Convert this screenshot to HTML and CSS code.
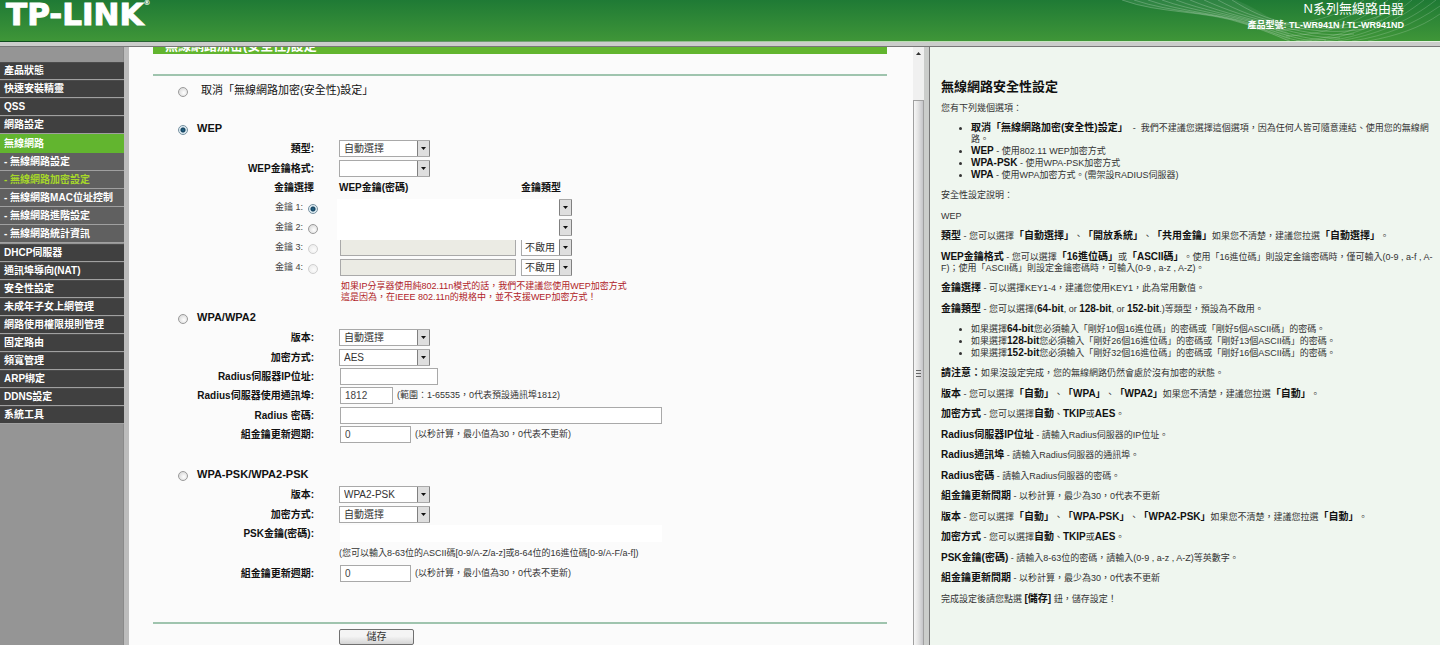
FILE: index.html
```html
<!DOCTYPE html>
<html lang="zh-Hant">
<head>
<meta charset="utf-8">
<title>TP-LINK TL-WR941N / TL-WR941ND</title>
<link rel="stylesheet" href="styles.css">
</head>
<body>
<header class="banner">
  <svg class="waves" width="330" height="41" viewBox="0 0 330 41" fill="none" stroke="#fff" aria-hidden="true">
    <path d="M12 0C50 14 95 10 135 24S170 38 178 41C190 34 150 10 126 0Z" fill="#fff" fill-opacity=".07" stroke="none"/>
    <g stroke-opacity=".22">
      <path d="M12 0C50 14 95 10 135 24S170 38 180 41"/>
      <path d="M24 0C62 13 104 12 138 24S176 38 190 41"/>
      <path d="M38 0C72 12 112 14 142 24S184 38 202 41"/>
      <path d="M52 0C82 11 120 15 148 24S194 39 216 40"/>
      <path d="M66 0C92 10 126 16 154 24S204 38 230 38"/>
      <path d="M80 0C104 10 132 17 160 24S214 37 244 34"/>
      <path d="M94 0C116 10 140 18 168 24S226 35 258 28"/>
      <path d="M108 0C126 10 148 19 176 24S238 32 272 20"/>
      <path d="M122 0C138 10 156 20 184 24S250 28 286 8"/>
    </g>
    <g stroke-opacity=".18">
      <path d="M186 41C230 38 262 26 290 0"/>
      <path d="M200 41C240 38 274 24 302 0"/>
      <path d="M214 41C252 38 286 22 314 0"/>
      <path d="M228 41C264 36 298 22 326 0"/>
      <path d="M242 41C276 36 304 24 330 6"/>
      <path d="M258 41C286 36 310 28 330 14"/>
      <path d="M176 36C220 34 250 22 278 0"/>
      <path d="M166 30C210 30 238 20 266 0"/>
      <path d="M156 24C198 26 226 16 254 0"/>
    </g>
  </svg>
  <div class="logo">TP-LINK<sup class="logo-mark">®</sup></div>
  <div class="product">
    <div class="product-name">N系列無線路由器</div>
    <div class="product-model">產品型號: TL-WR941N / TL-WR941ND</div>
  </div>
</header>
<div class="banner-edge"></div>

<div class="frames">
  <nav class="sidebar">
    <ul class="menu">
      <li><a class="menu-link" href="#">產品狀態</a></li>
      <li><a class="menu-link" href="#">快速安裝精靈</a></li>
      <li><a class="menu-link" href="#">QSS</a></li>
      <li><a class="menu-link" href="#">網路設定</a></li>
      <li><a class="menu-link open" href="#">無線網路</a>
        <ul class="submenu">
          <li><a class="menu-link" href="#">- 無線網路設定</a></li>
          <li><a class="menu-link current" href="#">- 無線網路加密設定</a></li>
          <li><a class="menu-link" href="#">- 無線網路MAC位址控制</a></li>
          <li><a class="menu-link" href="#">- 無線網路進階設定</a></li>
          <li><a class="menu-link" href="#">- 無線網路統計資訊</a></li>
        </ul>
      </li>
      <li><a class="menu-link" href="#">DHCP伺服器</a></li>
      <li><a class="menu-link" href="#">通訊埠導向(NAT)</a></li>
      <li><a class="menu-link" href="#">安全性設定</a></li>
      <li><a class="menu-link" href="#">未成年子女上網管理</a></li>
      <li><a class="menu-link" href="#">網路使用權限規則管理</a></li>
      <li><a class="menu-link" href="#">固定路由</a></li>
      <li><a class="menu-link" href="#">頻寬管理</a></li>
      <li><a class="menu-link" href="#">ARP綁定</a></li>
      <li><a class="menu-link" href="#">DDNS設定</a></li>
      <li><a class="menu-link" href="#">系統工具</a></li>
    </ul>
  </nav>

  <main class="main">
    <form class="settings">
      <h1 class="title">無線網路加密(安全性)設定</h1>
      <hr class="rule">
      <div class="mode mode-off">
        <input class="radio" type="radio" name="mode" id="mode-off">
        <label for="mode-off">取消「無線網路加密(安全性)設定」</label>
      </div>

      <section class="section section-wep">
        <div class="mode">
          <input class="radio" type="radio" name="mode" id="mode-wep" checked>
          <label for="mode-wep">WEP</label>
        </div>
        <div class="row">
          <label class="name" for="wep-type">類型:</label>
          <div class="field"><select class="select" id="wep-type"><option>自動選擇</option></select></div>
        </div>
        <div class="row">
          <label class="name" for="wep-format">WEP金鑰格式:</label>
          <div class="field"><select class="select" id="wep-format"><option></option></select></div>
        </div>
        <div class="row tight">
          <span class="name">金鑰選擇</span>
          <div class="field key-head"><span class="key-col">WEP金鑰(密碼)</span><span>金鑰類型</span></div>
        </div>
        <div class="keys">
          <div class="row">
            <div class="name key-name"><label for="key1">金鑰 1:</label><input class="radio" type="radio" name="key" id="key1" checked></div>
            <div class="field"><input class="text key-text" type="text" aria-label="金鑰 1"><select class="select small" aria-label="金鑰類型 1"><option></option></select></div>
          </div>
          <div class="row">
            <div class="name key-name"><label for="key2">金鑰 2:</label><input class="radio" type="radio" name="key" id="key2"></div>
            <div class="field"><input class="text key-text" type="text" aria-label="金鑰 2"><select class="select small" aria-label="金鑰類型 2"><option></option></select></div>
          </div>
          <div class="row">
            <div class="name key-name"><label for="key3">金鑰 3:</label><input class="radio" type="radio" name="key" id="key3" disabled></div>
            <div class="field"><input class="text key-text" type="text" aria-label="金鑰 3" disabled><select class="select small" aria-label="金鑰類型 3"><option>不啟用</option></select></div>
          </div>
          <div class="row">
            <div class="name key-name"><label for="key4">金鑰 4:</label><input class="radio" type="radio" name="key" id="key4" disabled></div>
            <div class="field"><input class="text key-text" type="text" aria-label="金鑰 4" disabled><select class="select small" aria-label="金鑰類型 4"><option>不啟用</option></select></div>
          </div>
          <div class="mask"></div>
        </div>
        <p class="warning">如果IP分享器使用純802.11n模式的話，我們不建議您使用WEP加密方式<br>這是因為，在IEEE 802.11n的規格中，並不支援WEP加密方式！</p>
      </section>

      <section class="section section-wpa">
        <div class="mode">
          <input class="radio" type="radio" name="mode" id="mode-wpa">
          <label for="mode-wpa">WPA/WPA2</label>
        </div>
        <div class="row">
          <label class="name" for="wpa-version">版本:</label>
          <div class="field"><select class="select" id="wpa-version"><option>自動選擇</option></select></div>
        </div>
        <div class="row">
          <label class="name" for="wpa-cipher">加密方式:</label>
          <div class="field"><select class="select" id="wpa-cipher"><option>AES</option></select></div>
        </div>
        <div class="row tight">
          <label class="name" for="radius-ip">Radius伺服器IP位址:</label>
          <div class="field"><input class="text w-ip" type="text" id="radius-ip"></div>
        </div>
        <div class="row tight">
          <label class="name" for="radius-port">Radius伺服器使用通訊埠:</label>
          <div class="field"><input class="text w-port" type="text" id="radius-port" value="1812"><span class="hint">(範圍：1-65535，0代表預設通訊埠1812)</span></div>
        </div>
        <div class="row">
          <label class="name" for="radius-key">Radius 密碼:</label>
          <div class="field"><input class="text w-key" type="text" id="radius-key"></div>
        </div>
        <div class="row tight">
          <label class="name" for="wpa-interval">組金鑰更新週期:</label>
          <div class="field"><input class="text w-interval" type="text" id="wpa-interval" value="0"><span class="hint">(以秒計算，最小值為30，0代表不更新)</span></div>
        </div>
      </section>

      <section class="section section-psk">
        <div class="mode">
          <input class="radio" type="radio" name="mode" id="mode-psk">
          <label for="mode-psk">WPA-PSK/WPA2-PSK</label>
        </div>
        <div class="row">
          <label class="name" for="psk-version">版本:</label>
          <div class="field"><select class="select" id="psk-version"><option>WPA2-PSK</option></select></div>
        </div>
        <div class="row">
          <label class="name" for="psk-cipher">加密方式:</label>
          <div class="field"><select class="select" id="psk-cipher"><option>自動選擇</option></select></div>
        </div>
        <div class="row tight">
          <label class="name" for="psk-key">PSK金鑰(密碼):</label>
          <div class="field"><input class="text w-key plain" type="text" id="psk-key"></div>
        </div>
        <div class="row">
          <span></span>
          <div class="field">(您可以輸入8-63位的ASCII碼[0-9/A-Z/a-z]或8-64位的16進位碼[0-9/A-F/a-f])</div>
        </div>
        <div class="row">
          <label class="name" for="psk-interval">組金鑰更新週期:</label>
          <div class="field"><input class="text w-interval" type="text" id="psk-interval" value="0"><span class="hint">(以秒計算，最小值為30，0代表不更新)</span></div>
        </div>
      </section>

      <hr class="rule rule-end">
      <div class="actions"><button class="save" type="button">儲存</button></div>
    </form>
    <div class="scrollbar" aria-hidden="true">
      <svg class="scroll-up" width="11" height="53" viewBox="0 0 11 53"><path d="M3 8L5.500 5L8 8Z" fill="#333"/></svg>
      <div class="thumb">
        <svg width="5" height="7" viewBox="0 0 5 7" stroke="#666"><path d="M0 .5H5M0 3.500H5M0 6.500H5"/></svg>
      </div>
    </div>
  </main>

  <aside class="help">
    <h2 class="help-title">無線網路安全性設定</h2>
    <p>您有下列幾個選項：</p>
    <ul class="options">
      <li><b>取消「無線網路加密(安全性)設定」</b>&nbsp; - &nbsp;我們不建議您選擇這個選項，因為任何人皆可隨意連結、使用您的無線網路。</li>
      <li><b>WEP</b> - 使用802.11 WEP加密方式</li>
      <li><b>WPA-PSK</b> - 使用WPA-PSK加密方式</li>
      <li><b>WPA</b> - 使用WPA加密方式。(需架設RADIUS伺服器)</li>
    </ul>
    <p>安全性設定說明：</p>
    <p>WEP</p>
    <p><b>類型</b> - 您可以選擇<b>「自動選擇」</b>、<b>「開放系統」</b>、<b>「共用金鑰」</b>如果您不清楚，建議您拉選<b>「自動選擇」</b>。</p>
    <p><b>WEP金鑰格式</b> - 您可以選擇<b>「16進位碼」</b>或<b>「ASCII碼」</b>。使用「16進位碼」則設定金鑰密碼時，僅可輸入(0-9 , a-f , A-F)；使用「ASCII碼」則設定金鑰密碼時，可輸入(0-9 , a-z , A-Z)。</p>
    <p><b>金鑰選擇</b> - 可以選擇KEY1-4，建議您使用KEY1，此為常用數值。</p>
    <p><b>金鑰類型</b> - 您可以選擇(<b>64-bit</b>, or <b>128-bit</b>, or <b>152-bit</b>.)等類型，預設為不啟用。</p>
    <ul class="options">
      <li>如果選擇<b>64-bit</b>您必須輸入「剛好10個16進位碼」的密碼或「剛好5個ASCII碼」的密碼。</li>
      <li>如果選擇<b>128-bit</b>您必須輸入「剛好26個16進位碼」的密碼或「剛好13個ASCII碼」的密碼。</li>
      <li>如果選擇<b>152-bit</b>您必須輸入「剛好32個16進位碼」的密碼或「剛好16個ASCII碼」的密碼。</li>
    </ul>
    <p><b>請注意：</b>如果沒設定完成，您的無線網路仍然會處於沒有加密的狀態。</p>
    <p><b>版本</b> - 您可以選擇<b>「自動」</b>、<b>「WPA」</b>、<b>「WPA2」</b>如果您不清楚，建議您拉選<b>「自動」</b>。</p>
    <p><b>加密方式</b> - 您可以選擇<b>自動</b>、<b>TKIP</b>或<b>AES</b>。</p>
    <p><b>Radius伺服器IP位址</b> - 請輸入Radius伺服器的IP位址。</p>
    <p><b>Radius通訊埠</b> - 請輸入Radius伺服器的通訊埠。</p>
    <p><b>Radius密碼</b> - 請輸入Radius伺服器的密碼。</p>
    <p><b>組金鑰更新間期</b> - 以秒計算，最少為30，0代表不更新</p>
    <p><b>版本</b> - 您可以選擇<b>「自動」</b>、<b>「WPA-PSK」</b>、<b>「WPA2-PSK」</b>如果您不清楚，建議您拉選<b>「自動」</b>。</p>
    <p><b>加密方式</b> - 您可以選擇<b>自動</b>、<b>TKIP</b>或<b>AES</b>。</p>
    <p><b>PSK金鑰(密碼)</b> - 請輸入8-63位的密碼，請輸入(0-9 , a-z , A-Z)等英數字。</p>
    <p><b>組金鑰更新間期</b> - 以秒計算，最少為30，0代表不更新</p>
    <p>完成設定後請您點選 <b>[儲存]</b> 鈕，儲存設定！</p>
  </aside>
</div>
</body>
</html>
```
FILE: styles.css
```css
* {
  box-sizing: border-box;
}

body {
  margin: 0;
  height: 100vh;
  display: flex;
  flex-direction: column;
  overflow: hidden;
  font-family: "Liberation Sans", "Noto Sans CJK TC", sans-serif;
  font-size: 9px;
  line-height: 11px;
  color: #333;
  text-spacing-trim: space-all;
}

ul {
  list-style: none;
  margin: 0;
  padding: 0;
}

/* Banner */
.banner {
  position: relative;
  flex: none;
  height: 41px;
  display: flex;
  justify-content: space-between;
  padding: 0 36px 0 6px;
  background: linear-gradient(#1f7a35, #3f9638);
  color: #fff;
}

.waves {
  position: absolute;
  top: 0;
  right: 0;
}

.logo {
  font-family: "DejaVu Sans", sans-serif;
  font-size: 31px;
  font-weight: bold;
  line-height: 28px;
  -webkit-text-stroke: 1px #fff;
}

.logo-mark {
  font-size: 7px;
  line-height: 7px;
  vertical-align: top;
  -webkit-text-stroke: 0;
}

.product {
  position: relative;
  text-align: right;
  font-weight: bold;
}

.product-name {
  font-size: 13px;
  line-height: 18px;
  font-weight: normal;
  -webkit-text-stroke: 0;
}

.product-model {
  line-height: 14px;
}

.banner-edge {
  flex: none;
  height: 6px;
  background: #cbcdcb;
  border-top: 1px solid;
  border-image: linear-gradient(90deg, #0c4a1c, #b8dcae 60%, #e6f2e2) 1;
  box-shadow: inset 0 -1px #777;
}

/* Frames */
.frames {
  flex: 1;
  min-height: 0;
  display: grid;
  grid-template-columns: 129px minmax(0, 800fr) minmax(0, 511fr);
}

.sidebar {
  padding-top: 15px;
  background: #959595;
  border-right: 5px solid #bcbcbc;
  box-shadow: inset -1px 0 #8a8a8a;
}

.menu-link {
  display: block;
  height: 18px;
  padding-left: 4px;
  border-bottom: 1px solid #a0a0a0;
  box-shadow: inset 0 1px #4c4c4c;
  background: #404040;
  color: #fff;
  font-size: 10px;
  font-weight: bold;
  line-height: 17px;
  text-decoration: none;
  white-space: nowrap;
}

.menu-link.open {
  height: 19px;
  background: #62b52f;
  border-bottom-color: #62b52f;
  box-shadow: none;
  line-height: 19px;
}

.submenu {
  padding-bottom: 1px;
}

.submenu .menu-link {
  background: #606060;
  box-shadow: none;
}

.submenu .current {
  color: #a6d72a;
}

/* Settings form */
.main {
  display: flex;
  min-height: 0;
  overflow: hidden;
  background: #fbfbfb;
  border-right: 5px solid #cbcdcb;
}

.settings {
  flex: 1;
  min-width: 0;
  padding: 0 26px 0 24px;
}

.title {
  margin: -9px 0 20px;
  padding-left: 12px;
  background: #62b52f;
  color: #fff;
  font-size: 13px;
  line-height: 16px;
}

.rule {
  height: 2px;
  margin: 0;
  border: 0;
  background: #9fc4ae;
}

.rule-end {
  margin-top: 39px;
}

.mode {
  display: flex;
  align-items: center;
  gap: 9px;
  height: 20px;
  padding-left: 25px;
  color: #111;
  font-size: 11px;
  font-weight: bold;
}

.mode .radio {
  margin-top: 4px;
}

.mode-off {
  gap: 13px;
  height: 28px;
  margin-bottom: 14px;
  font-weight: normal;
}

.section-wpa {
  margin-top: 4px;
}

.section-psk {
  margin-top: 20px;
}

.row {
  display: grid;
  grid-template-columns: 165px 1fr;
  align-items: center;
  height: 20px;
  white-space: nowrap;
}

.row.tight {
  height: 19px;
}

.name {
  padding-right: 4px;
  color: #111;
  font-size: 10px;
  font-weight: bold;
  text-align: right;
}

.key-name {
  display: flex;
  justify-content: flex-end;
  align-items: center;
  gap: 5px;
  padding-right: 0;
  color: #444;
  font-size: 9px;
  font-weight: normal;
}

.key-name .radio {
  margin-top: 4px;
}

.field {
  display: flex;
  align-items: center;
  padding-left: 21px;
}

.key-head {
  color: #111;
  font-size: 10px;
  font-weight: bold;
}

.key-col {
  width: 182px;
}

.keys {
  position: relative;
}

.mask {
  position: absolute;
  top: 2px;
  left: 184px;
  width: 222px;
  height: 41px;
  background: #fff;
}

.radio {
  appearance: none;
  flex: none;
  width: 10px;
  height: 10px;
  margin: 0;
  border: 1px solid #9a9a9a;
  border-radius: 50%;
  background: radial-gradient(circle at 60% 60%, #fff, #d0d0d0);
}

.radio:checked {
  border-color: #7590a0;
  background: radial-gradient(circle, #2b6f92 0, #123f5c 2px, #d5e6ee 3px, #fff);
}

.radio:disabled {
  opacity: 0.45;
}

.select {
  appearance: none;
  width: 91px;
  height: 17px;
  padding: 0 14px 0 4px;
  border: 1px solid #a9a9a9;
  border-radius: 0;
  color: #333;
  font-family: inherit;
  font-size: 10px;
  line-height: 15px;
  background: #fff url("data:image/svg+xml,%3Csvg xmlns='http://www.w3.org/2000/svg' width='13' height='17'%3E%3Crect x='.5' y='.5' width='12' height='16' fill='%23dedede' stroke='%23808080'/%3E%3Cpath d='M4 7h5l-2.500 3z' fill='%23111'/%3E%3C/svg%3E") no-repeat right center;
  background-origin: border-box;
  background-clip: border-box;
  border-right: 0;
}

.select.small {
  width: 51px;
  margin-left: 5px;
  padding-left: 3px;
}

.text {
  height: 17px;
  margin-left: 1px;
  padding: 0 4px;
  border: 1px solid #a9a9a9;
  background: #fff;
  color: #444;
  font-family: inherit;
  font-size: 10px;
}

.text:disabled {
  background: #ebebe4;
}

.text.plain {
  border-color: #fff;
}

.key-text {
  width: 176px;
}

.w-ip {
  width: 98px;
}

.w-port {
  width: 53px;
}

.w-key {
  width: 322px;
}

.w-interval {
  width: 71px;
}

.hint {
  margin-left: 4px;
}

.warning {
  margin: 4px 0 0;
  padding-left: 188px;
  color: #b01c28;
}

.actions {
  margin-top: 5px;
  padding-left: 186px;
}

.save {
  display: block;
  width: 75px;
  height: 16px;
  padding: 0;
  border: 1px solid #707070;
  border-radius: 2px;
  background: linear-gradient(#f4f4f4 45%, #d4d4d4);
  color: #333;
  font-family: inherit;
  font-size: 10px;
  line-height: 14px;
}

/* Scroll bar of the settings frame */
.scrollbar {
  flex: none;
  width: 11px;
  display: flex;
  flex-direction: column;
  background: #f0f0f0;
}

.scroll-up {
  flex: none;
}

.thumb {
  flex: 1;
  display: flex;
  align-items: center;
  justify-content: center;
  border: 1px solid #a0a0a0;
  border-bottom: 0;
  background: linear-gradient(90deg, #f6f6f6, #e4e4e4 45%, #c4c4c8);
}

/* Help */
.help {
  min-height: 0;
  overflow: hidden;
  padding: 32px 7px 0 11px;
  background: #eff6ef;
  border-left: 1px solid #777;
}

.help b {
  color: #111;
  font-size: 10px;
  line-height: 1px;
}

.help p {
  margin: 0 0 9px;
}

.help p:nth-of-type(even) {
  margin-bottom: 10px;
}

.help-title {
  margin: 0 0 8px;
  color: #111;
  font-size: 13px;
  line-height: 16px;
}

.help .options {
  margin-bottom: 9px;
  padding-left: 30px;
  list-style: disc;
}

.options li + li {
  margin-top: 1px;
}
```
